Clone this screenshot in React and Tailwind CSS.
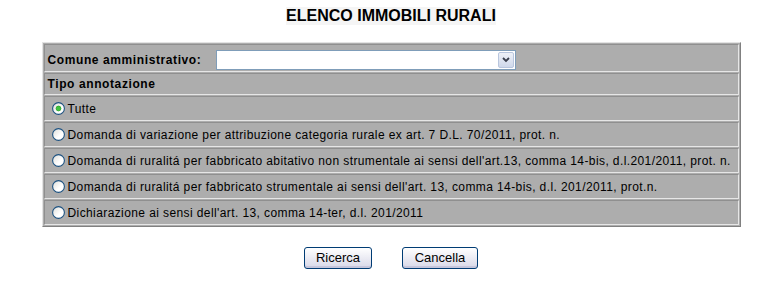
import React, { useState } from 'react';

const options = [
    'Tutte',
    'Domanda di variazione per attribuzione categoria rurale ex art. 7 D.L. 70/2011, prot. n.',
    "Domanda di ruralitá per fabbricato abitativo non strumentale ai sensi dell'art.13, comma 14-bis, d.l.201/2011, prot. n.",
    "Domanda di ruralitá per fabbricato strumentale ai sensi dell'art. 13, comma 14-bis, d.l. 201/2011, prot.n.",
    "Dichiarazione ai sensi dell'art. 13, comma 14-ter, d.l. 201/2011",
];

function Radio({ checked }) {
    return (
        <svg width="13" height="13" viewBox="0 0 13 13" className="shrink-0">
            <defs>
                <linearGradient id="rg" x1="0" y1="0" x2="1" y2="1">
                    <stop offset="0" stopColor="#dcdcd7" />
                    <stop offset="0.6" stopColor="#ffffff" />
                </linearGradient>
            </defs>
            <circle cx="6.5" cy="6.5" r="5.9" fill="url(#rg)" stroke="#1c5180" strokeWidth="1.1" />
            {checked && <circle cx="6.5" cy="6.5" r="2.4" fill="#3fc43f" stroke="#21a121" strokeWidth="0.8" />}
        </svg>
    );
}

const cell = 'border border-t-[#8f8f8f] border-l-[#8f8f8f] border-b-[#e6e6e6] border-r-[#e6e6e6] box-border';

export default function App() {
    const [sel, setSel] = useState(0);

    return (
        <div className="w-[772px] h-[284px] bg-white pl-[10px] flex flex-col items-center text-black" style={{ fontFamily: '"Liberation Sans", Arial, sans-serif' }}>
            {/* Titolo */}
            <h1 className="mt-[7px] text-[16px] leading-[18px] font-bold bg-[#f5f5f5]">ELENCO IMMOBILI RURALI</h1>

            {/* Tabella */}
            <div className="mt-[17px] w-[699px] bg-[#adadad] border border-t-[#e3e3e3] border-l-[#e3e3e3] border-r-[#808080] border-b-[#808080] p-[1px] flex flex-col gap-[1px] text-[12px]">
                <div className={`${cell} h-[28px] pl-[3px] pt-[5px] pb-[1px] flex items-center`}>
                    <span className="w-[168px] font-bold tracking-[0.6px]">Comune amministrativo:</span>
                    <div className="w-[300px] h-[20px] bg-white border border-[#7f9db9] flex justify-end p-[1px]">
                        <div className="w-[16px] h-full rounded-[2px] border border-[#b9c6de] bg-gradient-to-b from-[#eef1f8] to-[#cfd8ea] flex items-center justify-center">
                            <svg width="8" height="6" viewBox="0 0 8 6">
                                <polyline points="1,1 4,4 7,1" fill="none" stroke="#3a3f4d" strokeWidth="1.8" />
                            </svg>
                        </div>
                    </div>
                </div>
                <div className={`${cell} h-[22px] pl-[3px] flex items-center font-bold tracking-[0.6px]`}>Tipo annotazione</div>
                {options.map((o, i) => (
                    <div
                        key={i}
                        onClick={() => setSel(i)}
                        className={`${cell} h-[25px] pl-[7px] flex items-center gap-[3px] whitespace-nowrap cursor-default`}
                    >
                        <Radio checked={sel === i} />
                        <span className="tracking-[0.4px]">{o}</span>
                    </div>
                ))}
            </div>

            {/* Pulsanti */}
            <div className="mt-[20px] flex gap-[30px] text-[13px]">
                <button className="w-[68px] h-[22px] rounded-[3px] border border-[#003c74] bg-gradient-to-b from-white to-[#d8d8e8] shadow-[inset_0_-2px_0_#c6c6dc]">Ricerca</button>
                <button className="w-[76px] h-[22px] rounded-[3px] border border-[#003c74] bg-gradient-to-b from-white to-[#d8d8e8] shadow-[inset_0_-2px_0_#c6c6dc]">Cancella</button>
            </div>
        </div>
    );
}
